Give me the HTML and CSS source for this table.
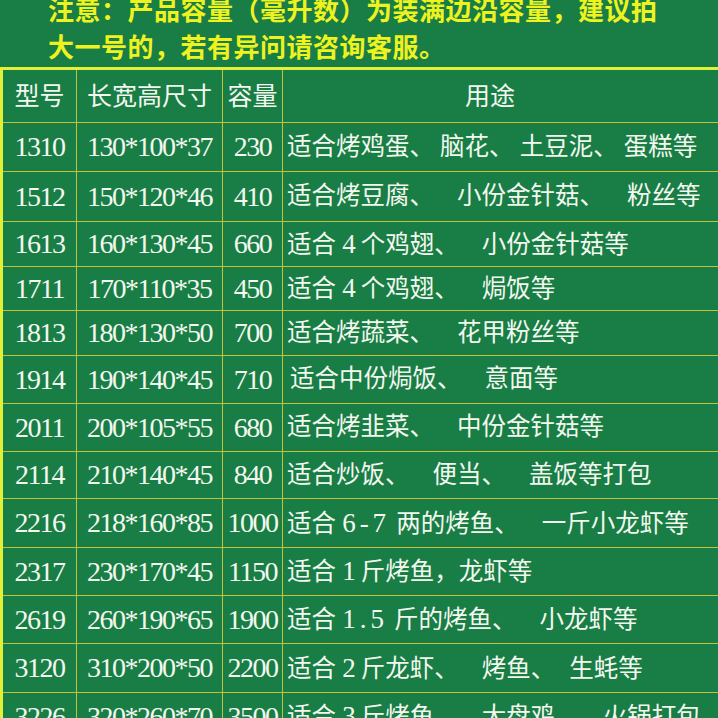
FILE: index.html
```html
<!DOCTYPE html>
<html lang="zh-CN">
<head>
<meta charset="utf-8">
<title>产品容量表</title>
<link rel="stylesheet" href="styles.css">
</head>
<body>
<div class="page">
  <div class="notice">
    <div class="line">注意：产品容量（毫升数）为装满边沿容量，建议拍</div>
    <div class="line">大一号的，若有异问请咨询客服。</div>
  </div>
  <div class="grid">
    <div class="cell c1 head">型号</div>
    <div class="cell c2 head">长宽高尺寸</div>
    <div class="cell c3 head">容量</div>
    <div class="cell c4 head use-head">用途</div>

    <div class="cell c1 num">1310</div>
    <div class="cell c2 num">130*100*37</div>
    <div class="cell c3 num">230</div>
    <div class="cell c4"><span class="t">适合烤鸡蛋、 脑花、 土豆泥、 蛋糕等</span></div>

    <div class="cell c1 num">1512</div>
    <div class="cell c2 num">150*120*46</div>
    <div class="cell c3 num">410</div>
    <div class="cell c4"><span class="t">适合烤豆腐、<span class="gap"></span>小份金针菇、<span class="gap"></span>粉丝等</span></div>

    <div class="cell c1 num">1613</div>
    <div class="cell c2 num">160*130*45</div>
    <div class="cell c3 num">660</div>
    <div class="cell c4"><span class="t">适合 <span class="n">4</span> 个鸡翅、<span class="gap"></span>小份金针菇等</span></div>

    <div class="cell c1 num">1711</div>
    <div class="cell c2 num">170*110*35</div>
    <div class="cell c3 num">450</div>
    <div class="cell c4"><span class="t">适合 <span class="n">4</span> 个鸡翅、<span class="gap"></span>焗饭等</span></div>

    <div class="cell c1 num">1813</div>
    <div class="cell c2 num">180*130*50</div>
    <div class="cell c3 num">700</div>
    <div class="cell c4"><span class="t">适合烤蔬菜、<span class="gap"></span>花甲粉丝等</span></div>

    <div class="cell c1 num">1914</div>
    <div class="cell c2 num">190*140*45</div>
    <div class="cell c3 num">710</div>
    <div class="cell c4 shift"><span class="t">适合中份焗饭、<span class="gap"></span>意面等</span></div>

    <div class="cell c1 num">2011</div>
    <div class="cell c2 num">200*105*55</div>
    <div class="cell c3 num">680</div>
    <div class="cell c4"><span class="t">适合烤韭菜、<span class="gap"></span>中份金针菇等</span></div>

    <div class="cell c1 num">2114</div>
    <div class="cell c2 num">210*140*45</div>
    <div class="cell c3 num">840</div>
    <div class="cell c4"><span class="t">适合炒饭、<span class="gap"></span>便当、<span class="gap"></span>盖饭等打包</span></div>

    <div class="cell c1 num">2216</div>
    <div class="cell c2 num">218*160*85</div>
    <div class="cell c3 num">1000</div>
    <div class="cell c4"><span class="t">适合 <span class="n wide">6-7</span> 两的烤鱼、<span class="gap"></span>一斤小龙虾等</span></div>

    <div class="cell c1 num">2317</div>
    <div class="cell c2 num">230*170*45</div>
    <div class="cell c3 num">1150</div>
    <div class="cell c4"><span class="t">适合 <span class="n">1</span> 斤烤鱼，龙虾等</span></div>

    <div class="cell c1 num">2619</div>
    <div class="cell c2 num">260*190*65</div>
    <div class="cell c3 num">1900</div>
    <div class="cell c4"><span class="t">适合 <span class="n wide">1.5</span> 斤的烤鱼、<span class="gap"></span>小龙虾等</span></div>

    <div class="cell c1 num">3120</div>
    <div class="cell c2 num">310*200*50</div>
    <div class="cell c3 num">2200</div>
    <div class="cell c4"><span class="t">适合 <span class="n">2</span> 斤龙虾、<span class="gap"></span>烤鱼、<span class="gap small"></span>生蚝等</span></div>

    <div class="cell c1 num">3226</div>
    <div class="cell c2 num">320*260*70</div>
    <div class="cell c3 num">3500</div>
    <div class="cell c4"><span class="t">适合 <span class="n">3</span> 斤烤鱼、<span class="gap"></span>大盘鸡、<span class="gap"></span>火锅打包</span></div>
  </div>
</div>
</body>
</html>
```

FILE: styles.css
```css
html, body {
  margin: 0;
  padding: 0;
  width: 718px;
  height: 718px;
  overflow: hidden;
  background: #197d46;
}

.page {
  width: 718px;
  height: 718px;
  overflow: hidden;
  background: #197d46;
}

.notice {
  margin-top: -10px;
  padding-left: 48px;
  font-family: "Noto Sans CJK SC", sans-serif;
  font-weight: 700;
  font-size: 26px;
  letter-spacing: 0.5px;
  line-height: 37px;
  color: #eef31f;
  white-space: nowrap;
}

.grid {
  margin-top: 3px;
  display: grid;
  grid-template-columns: 74px 146px 60px 440px;
  grid-template-rows: 53px 49px 50px 45px 44px 45px 48px 48px 47px 49px 48px 48px 49px 48px;
  width: 720px;
  border-top: 3px solid #e2f03a;
  border-left: 3px solid #e2f03a;
  font-family: "Liberation Serif", "Noto Sans CJK SC", serif;
  font-size: 24.5px;
  line-height: 1;
  color: #f3f8ef;
}

.cell {
  box-sizing: border-box;
  border-right: 1px solid #c3c23a;
  border-bottom: 1px solid #c3c23a;
  display: flex;
  align-items: center;
  white-space: nowrap;
  overflow: visible;
}

.c1, .c2, .c3 {
  justify-content: center;
}

.c4 {
  padding-left: 4px;
  justify-content: flex-start;
}

.shift {
  padding-left: 7px;
}

.t {
  white-space: nowrap;
}

.gap {
  display: inline-block;
  width: 23px;
}

.gap.small {
  width: 14px;
}

.head {
  font-size: 25px;
}

.use-head {
  padding-left: 182px;
}

.num {
  font-size: 28px;
  letter-spacing: -1.5px;
}

.n {
  font-size: 27px;
  letter-spacing: -1px;
}

.n.wide {
  letter-spacing: 4px;
}
```
